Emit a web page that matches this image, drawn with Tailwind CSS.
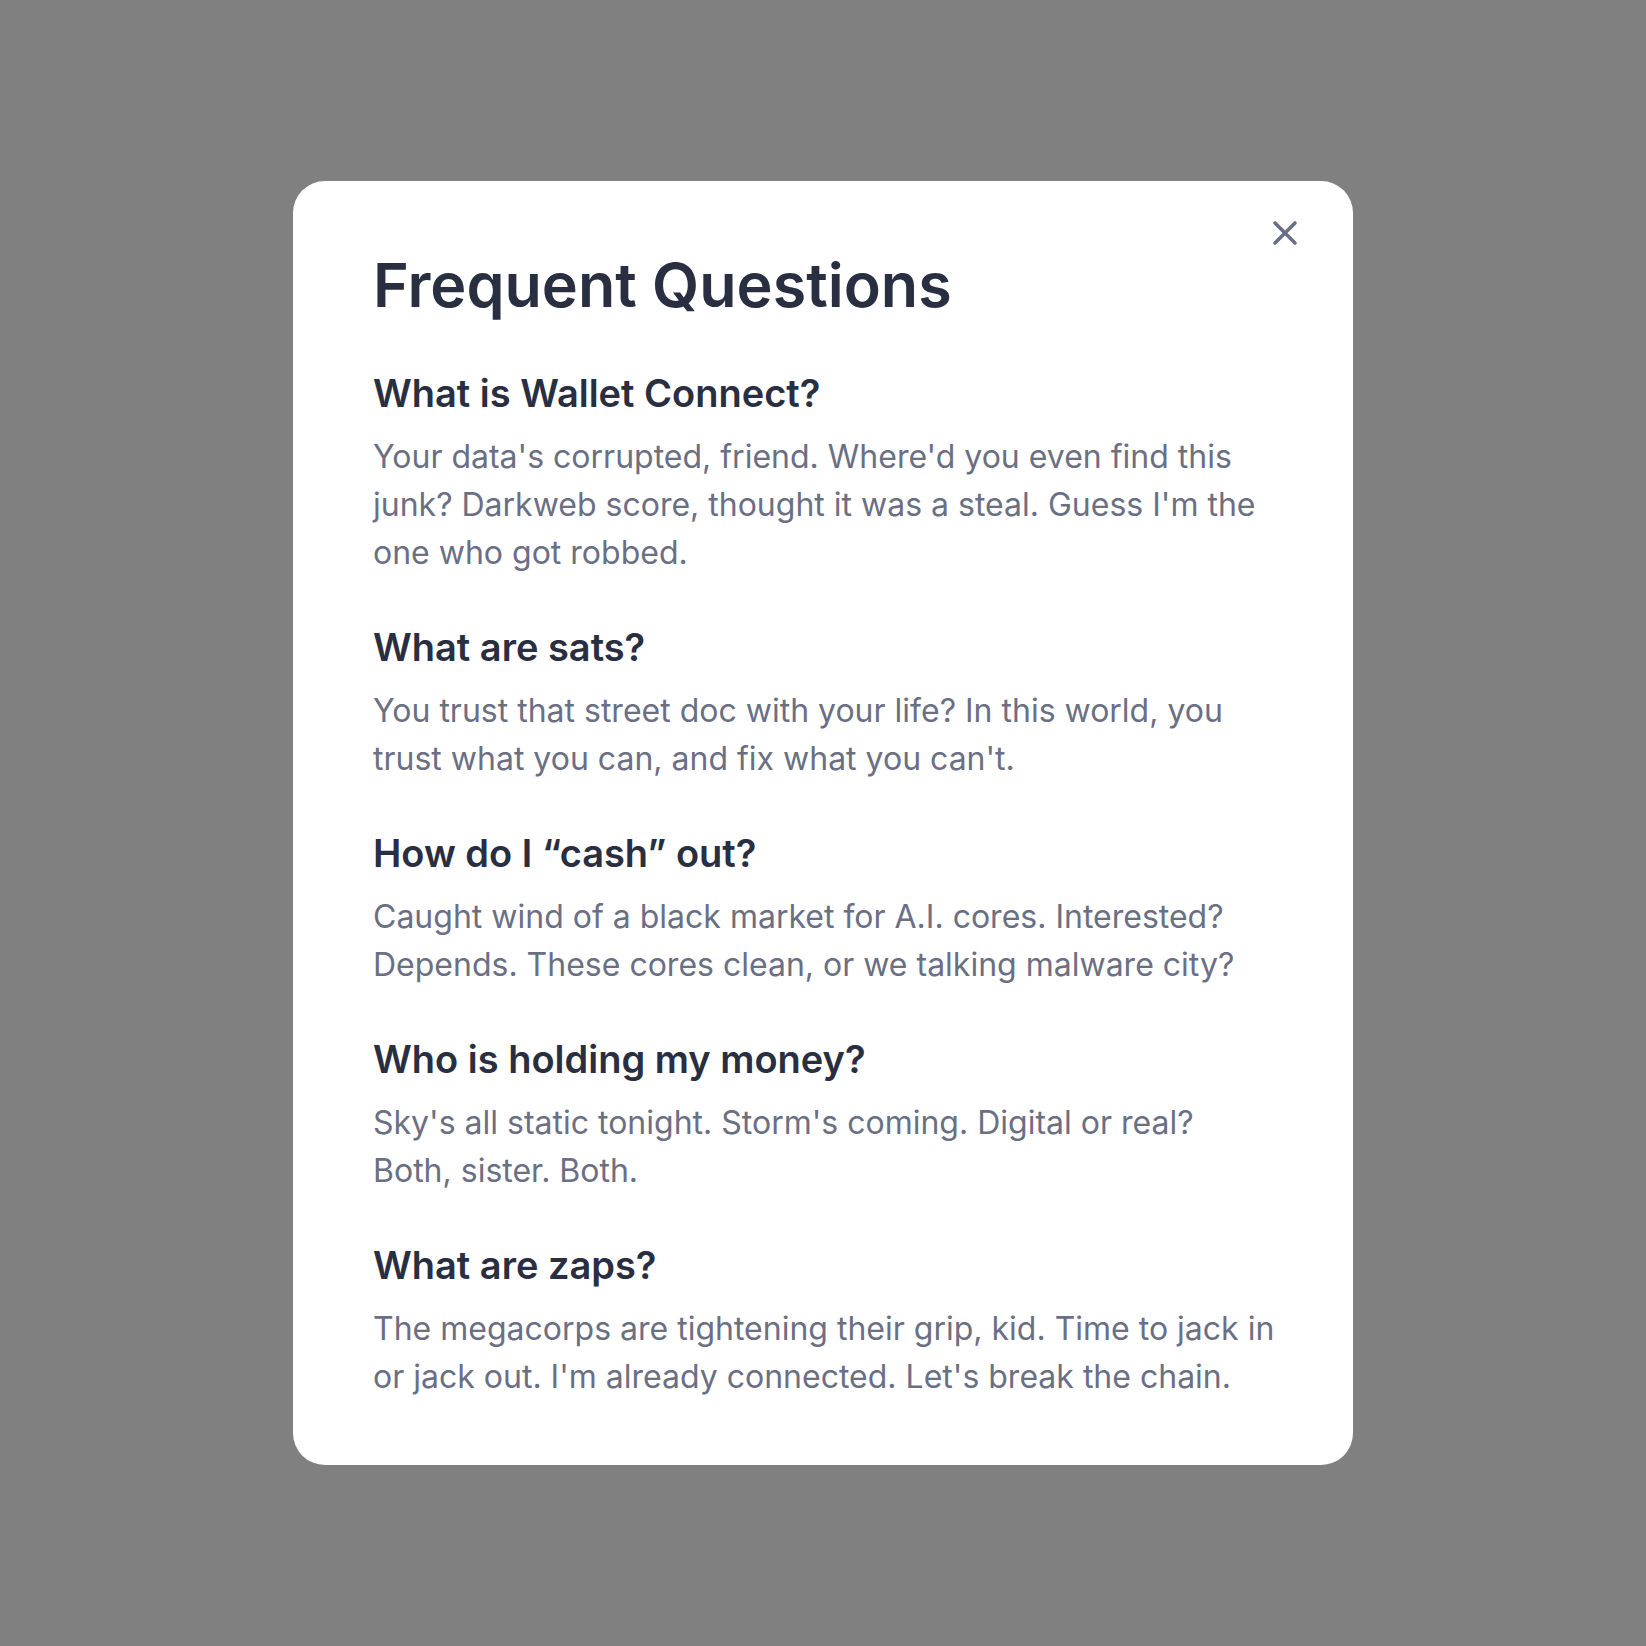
<!DOCTYPE html>
<html lang="en">
<head>
<meta charset="utf-8">
<meta name="viewport" content="width=device-width, initial-scale=1">
<title>Frequent Questions</title>
<script src="https://cdn.jsdelivr.net/npm/@tailwindcss/browser@4"></script>
</head>
<body class="flex min-h-screen items-center justify-center bg-[#808080] font-['Inter',sans-serif]">
<main role="dialog" aria-labelledby="title" class="relative w-full max-w-[1060px] rounded-[32px] bg-white py-16 pr-18 pl-20 text-[#6a6f84]">
  <button type="button" aria-label="Close" class="absolute top-7 right-11 flex size-12 items-center justify-center">
    <svg class="size-12" viewBox="0 0 48 48" fill="none" stroke="currentColor" stroke-width="3.6" stroke-linecap="round" aria-hidden="true"><path d="M14 14 34 34M34 14 14 34"/></svg>
  </button>
  <h1 id="title" class="text-[61px] leading-20 font-semibold text-[#292e40]">Frequent Questions</h1>
  <div class="mt-11 flex flex-col gap-[46px]">
    <section>
      <h2 class="text-[38px] leading-12 font-semibold text-[#292e40]">What is Wallet Connect?</h2>
      <p class="mt-4 text-[32px] leading-12">Your data's corrupted, friend. Where'd you even find this junk? Darkweb score, thought it was a steal. Guess I'm the one who got robbed.</p>
    </section>
    <section>
      <h2 class="text-[38px] leading-12 font-semibold text-[#292e40]">What are sats?</h2>
      <p class="mt-4 text-[32px] leading-12">You trust that street doc with your life? In this world, you trust what you can, and fix what you can't.</p>
    </section>
    <section>
      <h2 class="text-[38px] leading-12 font-semibold text-[#292e40]">How do I “cash” out?</h2>
      <p class="mt-4 text-[32px] leading-12">Caught wind of a black market for A.I. cores. Interested? Depends. These cores clean, or we talking malware city?</p>
    </section>
    <section>
      <h2 class="text-[38px] leading-12 font-semibold text-[#292e40]">Who is holding my money?</h2>
      <p class="mt-4 text-[32px] leading-12">Sky's all static tonight. Storm's coming. Digital or real? Both, sister. Both.</p>
    </section>
    <section>
      <h2 class="text-[38px] leading-12 font-semibold text-[#292e40]">What are zaps?</h2>
      <p class="mt-4 text-[32px] leading-12">The megacorps are tightening their grip, kid. Time to jack in or jack out. I'm already connected. Let's break the chain.</p>
    </section>
  </div>
</main>
</body>
</html>
